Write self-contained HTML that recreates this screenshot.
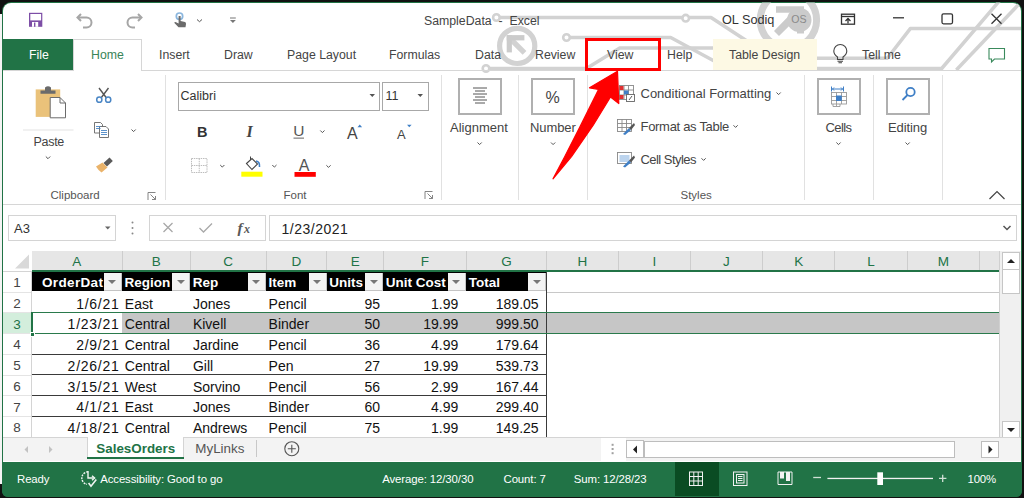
<!DOCTYPE html>
<html><head><meta charset="utf-8">
<style>
*{margin:0;padding:0;box-sizing:border-box}
html,body{width:1024px;height:498px;overflow:hidden;background:#fff}
body{position:relative;font-family:"Liberation Sans",sans-serif;color:#262626}
.a{position:absolute}
.t{position:absolute;white-space:nowrap;line-height:1}
.tab{top:48.7px;font-size:12.3px;color:#444}
.rb{font-size:13px;color:#444}
.rbl{font-size:11.5px;color:#555}
.sep{top:75px;width:1px;height:125px;background:#e1e1e1}
.bigbox{top:77.5px;width:44px;height:37px;border:2px solid #b0b0b0}
.fb{font-size:13px}
.colhdr{background:#e6e6e6}
.ch{font-size:13.5px;color:#217346;text-align:center}
.rh{font-size:13.5px;color:#444;text-align:center}
.hd{font-size:13.5px;font-weight:bold;color:#fff}
.flt{width:18px;height:17.6px;background:#f3f3f3;border-right:1px solid #c4c4c4;border-bottom:1px solid #c4c4c4}
.flt:after{content:"";position:absolute;left:4.5px;top:6.5px;border-left:4px solid transparent;border-right:4px solid transparent;border-top:4px solid #777}
.cl{font-size:14px;color:#111}
.st{font-size:13.4px}
.sb{font-size:11.4px;color:#fff;letter-spacing:-0.1px}
</style></head><body>
<!-- window frame -->
<div class="a" style="left:0;top:0;width:1024px;height:498px;background:#111"></div>
<div class="a" style="left:0;top:14px;width:2px;height:470px;background:#f4f4f4"></div>
<div class="a" style="left:1.5px;top:1.5px;width:1020.5px;height:495px;background:#217346;border-radius:9px 9px 6px 6px"></div>
<div class="a" style="left:2.5px;top:2.5px;width:1018.5px;height:459px;background:#fff;border-radius:8px 8px 0 0"></div>
<!-- circuit background -->
<svg class="a" style="left:0;top:0" width="1024" height="80" viewBox="0 0 1024 80">
<defs><clipPath id="cc"><path d="M3,2.5 H1013 A8,8 0 0 1 1021,10.5 V80 H3 Z"/></clipPath></defs>
<g clip-path="url(#cc)">
<g fill="none" stroke="#d2d2d2" stroke-width="3.5" stroke-linejoin="round">
<path d="M496.4,17.5 H711 L750,43"/>
<path d="M566.5,37.5 H670.7 L716,62"/>
<path d="M486,68.5 H586.4 L619.8,48.1 H716"/>
<path d="M812,58.2 H887.3 L910.3,28.6 H1021"/>
<path d="M812,68.5 H941.7 L1001,-1"/>
<path d="M956.3,70 L1020,3"/>
<circle cx="517.2" cy="45.9" r="17.6" stroke-width="5.2"/>
<circle cx="788.4" cy="20" r="28.2" stroke-width="7"/>
<path d="M509,37.5 L524.5,52.9" stroke-width="5.3" stroke-linecap="butt"/>
</g>
<g fill="#fff" stroke="#d2d2d2" stroke-width="2.6">
<circle cx="496.4" cy="17.5" r="3.3"/>
<circle cx="566.5" cy="37.5" r="3.3"/>
<circle cx="685.7" cy="18.2" r="3.3"/>
<circle cx="486" cy="68.5" r="3.3"/>
</g>
<g fill="#cbcbcb">
<rect x="506.7" y="35.1" width="17.7" height="5.3"/>
<rect x="506.7" y="35.1" width="5.2" height="17.3"/>
<circle cx="799.3" cy="19.9" r="12.2"/>
<path d="M776,6.3 H804 V33.5 H797 V18.3 L779,36 L774,31 L791.8,12.8 H776 Z"/>
</g>
</g>
</svg>
<!-- title -->
<div class="t" style="left:424px;top:14.8px;font-size:12.3px;color:#444">SampleData&nbsp;&nbsp;-&nbsp;&nbsp;Excel</div>
<div class="t" style="left:722px;top:14px;font-size:12.7px;color:#333">OL Sodiq</div>
<div class="t" style="left:791.3px;top:14.2px;font-size:10.6px;color:#8a8a8a">OS</div>
<!-- QAT icons -->
<svg class="a" style="left:0;top:0" width="260" height="40">
<g>
<rect x="29" y="12.8" width="13.3" height="14" fill="#7d4ea6"/>
<rect x="30.3" y="14" width="10.8" height="6.4" fill="#fff"/>
<rect x="32" y="22" width="6.2" height="4.8" fill="#fff"/>
<rect x="34" y="22.5" width="1.4" height="4.3" fill="#7d4ea6"/>
</g>
<g fill="none" stroke="#a6a6a6" stroke-width="2">
<path d="M78,17.5 H86.5 A5,5 0 0 1 86.5,27.5 H83"/>
<path d="M81,14 L77.5,17.5 L81,21"/>
<path d="M141,17.5 H132.5 A5,5 0 0 0 132.5,27.5 H135"/>
<path d="M138,14 L141.5,17.5 L138,21"/>
</g>
<circle cx="179.5" cy="16.2" r="3.2" fill="none" stroke="#8ab6de" stroke-width="1.7"/>
<path d="M178.6,16 H180.6 V21 L185,22 Q186.2,22.5 186,24 L185.5,27.2 H178.5 L174.2,22.8 Q174.8,21.8 176,22.2 L178.6,23.5 Z" fill="#6b6b6b"/>
<path d="M197,19.5 L199.5,21.7 L202,19.5" fill="none" stroke="#555" stroke-width="1"/>
<rect x="230" y="17.5" width="5.8" height="1" fill="#777"/>
<path d="M230,20 H235.8 L232.9,23 Z" fill="#777"/>
</svg>
<!-- right controls -->
<svg class="a" style="left:830;top:0" width="194" height="40" viewBox="830 0 194 40">
<g fill="none" stroke="#333" stroke-width="1.3">
<rect x="841.5" y="14.2" width="13" height="10" />
<path d="M841.5,16.5 H854.5"/>
<path d="M848,23.5 V18.5 M845.5,21 L848,18.5 L850.5,21"/>
<path d="M893,17.8 H904"/>
<rect x="942" y="13.8" width="10.5" height="10" rx="1.5"/>
<path d="M991.5,13.8 L1001.5,23.8 M1001.5,13.8 L991.5,23.8"/>
</g>
</svg>

<!-- tabs row -->
<div class="a" style="left:3px;top:69.5px;width:1018px;height:1px;background:#d6d6d6"></div>
<div class="a" style="left:3px;top:39px;width:70px;height:31px;background:#217346"></div>
<div class="a" style="left:73px;top:39px;width:69px;height:32px;background:#fff;border:1px solid #d6d6d6;border-bottom:none"></div>
<div class="a" style="left:713px;top:39px;width:104px;height:31px;background:#fdf9e4"></div>
<div class="t tab" style="left:29px;color:#fff">File</div>
<div class="t tab" style="left:91px;color:#3a8458">Home</div>
<div class="t tab" style="left:159px">Insert</div>
<div class="t tab" style="left:224px">Draw</div>
<div class="t tab" style="left:287px">Page Layout</div>
<div class="t tab" style="left:389px">Formulas</div>
<div class="t tab" style="left:475px">Data</div>
<div class="t tab" style="left:535px">Review</div>
<div class="t tab" style="left:607px">View</div>
<div class="t tab" style="left:667px">Help</div>
<div class="t tab" style="left:729px">Table Design</div>
<div class="t tab" style="left:862px">Tell me</div>
<svg class="a" style="left:830px;top:40px" width="194" height="30" viewBox="830 40 194 30">
<g fill="none" stroke="#444" stroke-width="1.1">
<path d="M837.5,57 C834.5,55 833.8,52.5 833.8,51 A6.5,6.5 0 0 1 846.8,51 C846.8,52.5 846,55 843,57 V59.5 H837.5 Z"/>
<path d="M837.5,61.3 H843 M838.5,62.8 H842"/>
</g>
<path d="M989,48.5 H1004.5 V59 H994.5 L991.5,62 V59 H989 Z" fill="none" stroke="#3a8a5c" stroke-width="1.1"/>
</svg>
<!-- red highlight box -->
<div class="a" style="left:585px;top:38px;width:76px;height:32.5px;border:3px solid #f00"></div>

<!-- ribbon -->
<div class="a" style="left:3px;top:203.5px;width:1018px;height:1px;background:#d6d6d6"></div>
<!-- separators -->
<div class="a sep" style="left:164.5px"></div>
<div class="a sep" style="left:441px"></div>
<div class="a sep" style="left:518px"></div>
<div class="a sep" style="left:587px"></div>
<div class="a sep" style="left:804px"></div>
<div class="a sep" style="left:873px"></div>
<div class="a sep" style="left:942px"></div>
<!-- clipboard -->
<svg class="a" style="left:0;top:70px" width="170" height="135" viewBox="0 70 170 135">
<rect x="35.7" y="89.4" width="24.5" height="27.5" fill="#eac27a"/>
<path d="M40.5,93.8 V90.5 H45 V87.5 Q48,85 51,87.5 V90.5 H55.5 V93.8 Z" fill="#6b6b6b"/>
<path d="M50.2,97.5 H60 L65.5,103 V117.8 H50.2 Z" fill="#fff" stroke="#6b6b6b" stroke-width="1"/>
<path d="M60,97.5 V103 H65.5" fill="none" stroke="#6b6b6b" stroke-width="1"/>
<rect x="23" y="129.5" width="50.5" height="1" fill="#e3e3e3"/>
<path d="M45.8,156.5 L48,158.7 L50.2,156.5" fill="none" stroke="#555" stroke-width="1"/>
<!-- scissors -->
<g fill="none" stroke="#555" stroke-width="1.4"><path d="M99,88 L106.5,98 M108.5,88 L101,98"/></g>
<g fill="none" stroke="#4a86c5" stroke-width="1.5"><circle cx="99.3" cy="99.7" r="2.6"/><circle cx="108.2" cy="99.7" r="2.6"/></g>
<!-- copy -->
<g fill="#fff" stroke="#666" stroke-width="0.9">
<path d="M94.5,122.5 H100.5 L102.5,124.5 V133 H94.5 Z"/>
<path d="M99.5,126.5 H106 L108.5,129 V137.5 H99.5 Z"/>
</g>
<g stroke="#4a86c5" stroke-width="0.9"><path d="M96,126.5 H100.5 M96,128.5 H100.5 M101,130.5 H107 M101,132.5 H107 M101,134.5 H107"/></g>
<path d="M131.5,129.5 L133.6,131.6 L135.7,129.5" fill="none" stroke="#555" stroke-width="1"/>
<!-- format painter -->
<path d="M103.5,163 L109.5,157.5 L112.8,161 L107,166.5 Z" fill="#5a5a5a"/>
<path d="M96,166.5 L102.5,162.5 L107.5,167.5 L101.5,172.5 Q98,170 96,166.5 Z" fill="#eab36a"/>
<!-- launcher -->
<g fill="none" stroke="#777" stroke-width="0.9"><path d="M148,200 V192.5 H155.5 M150.5,194.5 L155.5,199.5 M152,199.5 H155.5 V196"/></g>
</svg>
<div class="t rb" style="left:33.5px;top:135.5px;font-size:12.5px;letter-spacing:-0.3px">Paste</div>
<div class="t rbl" style="left:50.5px;top:190px">Clipboard</div>
<!-- font group -->
<div class="a" style="left:178px;top:81.5px;width:202px;height:29px;border:1px solid #a8a8a8"></div>
<div class="a" style="left:382px;top:81.5px;width:47px;height:29px;border:1px solid #a8a8a8"></div>
<div class="t rb" style="left:180.5px;top:90px;color:#333;font-size:12.5px">Calibri</div>
<div class="t rb" style="left:385.5px;top:90px;color:#333;font-size:12.5px">11</div>
<svg class="a" style="left:165px;top:75px" width="280" height="130" viewBox="165 75 280 130">
<path d="M369.5,94 H375 L372.25,97 Z M417.5,94 H423 L420.25,97 Z" fill="#555"/>
<text x="197" y="136.6" font-family="Liberation Sans" font-weight="bold" font-size="14.5" fill="#333">B</text>
<text x="246.5" y="136.6" font-family="Liberation Serif" font-style="italic" font-weight="bold" font-size="16" fill="#444">I</text>
<text x="293.3" y="136.3" font-family="Liberation Sans" font-size="15.5" fill="#555">U</text>
<rect x="293.5" y="137.5" width="10.5" height="1.3" fill="#888"/>
<path d="M320.3,130.5 L322.4,132.6 L324.5,130.5" fill="none" stroke="#555" stroke-width="1"/>
<text x="347" y="138.8" font-family="Liberation Sans" font-size="16" fill="#444">A</text>
<path d="M357.5,127.2 L359.8,124.6 L362.1,127.2 Z" fill="#3f7fc6"/>
<text x="397" y="138.8" font-family="Liberation Sans" font-size="13" fill="#444">A</text>
<path d="M407,124.8 H411.6 L409.3,127.2 Z" fill="#3f7fc6"/>
<!-- borders -->
<g fill="none" stroke="#bdbdbd" stroke-width="1" stroke-dasharray="1.5 0.8"><rect x="191.5" y="158.5" width="15.5" height="14"/><path d="M199.25,158.5 V172.5 M191.5,165.5 H207"/></g>
<path d="M220.2,165 L222.3,167.1 L224.4,165" fill="none" stroke="#555" stroke-width="1"/>
<!-- fill -->
<path d="M246.5,163.5 L252,158.5 L257.5,164 L252,169.5 Z" fill="#fff" stroke="#444" stroke-width="1.1"/>
<path d="M250.5,160 V156.5" stroke="#444" stroke-width="1"/>
<path d="M256,161 Q260,161.5 259.5,167" fill="none" stroke="#3f7fc6" stroke-width="1.6"/>
<rect x="241.3" y="171.7" width="21.2" height="5" fill="#ffff00"/>
<path d="M272.3,165 L274.4,167.1 L276.5,165" fill="none" stroke="#555" stroke-width="1"/>
<!-- font color -->
<text x="298.8" y="170.5" font-family="Liberation Sans" font-size="16" fill="#555">A</text>
<rect x="294.5" y="172" width="21.3" height="4.8" fill="#f00"/>
<path d="M326.4,165.3 L328.5,167.4 L330.6,165.3" fill="none" stroke="#555" stroke-width="1"/>
<g fill="none" stroke="#777" stroke-width="0.9"><path d="M425,199 V191.5 H432.5 M427.5,193.5 L432.5,198.5 M429,198.5 H432.5 V195"/></g>
</svg>
<div class="t rbl" style="left:283.5px;top:190px">Font</div>
<!-- alignment / number -->
<div class="a bigbox" style="left:457.5px"></div>
<div class="a bigbox" style="left:531px"></div>
<div class="a bigbox" style="left:816.5px"></div>
<div class="a bigbox" style="left:886px"></div>
<svg class="a" style="left:440px;top:75px" width="580" height="130" viewBox="440 75 580 130">
<g stroke="#555" stroke-width="1"><path d="M473,88 H487 M475,91 H485 M473,94 H487 M475,97 H485 M473,100 H487 M475,103 H485"/></g>
<text x="545.5" y="102.8" font-family="Liberation Sans" font-size="16" fill="#444">%</text>
<path d="M477.5,142.5 L479.6,144.6 L481.7,142.5 M551,142.5 L553.1,144.6 L555.2,142.5 M836.4,142.5 L838.5,144.6 L840.6,142.5 M905.5,142.5 L907.6,144.6 L909.7,142.5" fill="none" stroke="#555" stroke-width="1"/>
<!-- cells icon -->
<g fill="none" stroke="#999" stroke-width="0.9"><rect x="831.5" y="92.5" width="15" height="11.5"/><path d="M836.5,92.5 V106 M841.5,92.5 V104 M831.5,96.5 H846.5 M831.5,100.5 H846.5 M833,104 V106.5 H840 V104"/></g>
<rect x="836" y="95.5" width="5.8" height="5.5" fill="#3f7fc6"/>
<g stroke="#3f7fc6" stroke-width="1" fill="none"><path d="M831.5,89 H843.5 M831.5,86.5 V91.5 M843.5,86.5 V91.5 M834,87.5 L832.5,89 L834,90.5 M841,87.5 L842.5,89 L841,90.5"/></g>
<!-- editing icon -->
<g fill="none" stroke="#3f7fc6" stroke-width="1.8"><circle cx="910.5" cy="92" r="4.2"/><path d="M907.5,95 L902.5,100"/></g>
<!-- CF icon -->
<g fill="none" stroke="#888" stroke-width="0.9"><rect x="619.5" y="85.5" width="14" height="14"/><path d="M624,85.5 V99.5 M628.5,85.5 V99.5 M619.5,90 H633.5 M619.5,95 H633.5"/></g>
<rect x="619.5" y="86" width="4" height="4" fill="#e03030"/><rect x="624" y="90.5" width="4.5" height="4" fill="#3f7fc6"/><rect x="619.5" y="95" width="4" height="4" fill="#e03030"/>
<rect x="626.5" y="94.5" width="8" height="7" fill="#fff" stroke="#666" stroke-width="0.9"/>
<path d="M629,100 L632,96" stroke="#444" stroke-width="0.9"/>
<!-- FaT icon -->
<g fill="none" stroke="#888" stroke-width="0.9"><rect x="617.5" y="119.5" width="14" height="12"/><path d="M622,119.5 V131.5 M626.5,119.5 V131.5 M617.5,123.5 H631.5 M617.5,127.5 H631.5"/></g>
<path d="M623,134 L629,128 L631,130 L625,135 Z" fill="#3f7fc6"/><path d="M629,128 L634,123 L635,125 L631,130 Z" fill="#555"/>
<!-- cell styles icon -->
<g fill="none" stroke="#888" stroke-width="0.9"><rect x="617.5" y="152.5" width="14" height="11"/></g>
<rect x="619.5" y="155" width="10" height="7" fill="#bcd4ee"/>
<path d="M623,166.5 L629,160.5 L631,162.5 L625,167.5 Z" fill="#3f7fc6"/><path d="M629,160.5 L634,155.5 L635,157.5 L631,162.5 Z" fill="#555"/>
<path d="M776.5,92.5 L778.6,94.6 L780.7,92.5 M733.5,125.3 L735.6,127.4 L737.7,125.3 M701.5,158.3 L703.6,160.4 L705.7,158.3" fill="none" stroke="#555" stroke-width="1"/>
<path d="M989.5,199 L997,191.5 L1004.5,199" fill="none" stroke="#444" stroke-width="1.2"/>
</svg>
<div class="t rb" style="left:450px;top:120.5px">Alignment</div>
<div class="t rb" style="left:530px;top:120.5px;letter-spacing:-0.1px">Number</div>
<div class="t rb" style="left:640.5px;top:86.5px">Conditional Formatting</div>
<div class="t rb" style="left:640.5px;top:119.5px;letter-spacing:-0.3px">Format as Table</div>
<div class="t rb" style="left:640.5px;top:152.5px;letter-spacing:-0.55px">Cell Styles</div>
<div class="t rbl" style="left:680.5px;top:190px">Styles</div>
<div class="t rb" style="left:825.5px;top:120.5px;letter-spacing:-0.6px">Cells</div>
<div class="t rb" style="left:888px;top:120.5px;letter-spacing:-0.1px">Editing</div>
<!-- red arrow -->
<svg class="a" style="left:540px;top:60px" width="100" height="130" viewBox="540 60 100 130">
<path d="M617.5,71.3 L589.5,87.8 L598.5,89.5 L580.7,125.2 L564.8,156.6 L553,178.8 L571.5,156.6 L593.2,125.2 L610.5,97 L618.8,103.5 Z" fill="#f00" stroke="#f00" stroke-width="1.2" stroke-linejoin="round"/>
</svg>

<div class="a" style="left:8px;top:215px;width:108px;height:25.5px;border:1px solid #d4d4d4"></div>
<div class="t fb" style="left:14px;top:222px;color:#333">A3</div>
<svg class="a" style="left:99.5px;top:220px" width="20" height="16"><path d="M5,6.5 H10.5 L7.75,9.5 Z" fill="#666"/></svg>
<svg class="a" style="left:128px;top:218px" width="10" height="20"><g fill="#888"><circle cx="4.5" cy="4.5" r="1"/><circle cx="4.5" cy="10" r="1"/><circle cx="4.5" cy="15.5" r="1"/></g></svg>
<div class="a" style="left:149px;top:215px;width:117px;height:25.5px;border:1px solid #d4d4d4"></div>
<svg class="a" style="left:150px;top:216px" width="116" height="24" viewBox="150 216 116 24"><g fill="none" stroke="#a8a8a8" stroke-width="1.3"><path d="M163.5,223 L172.5,232 M172.5,223 L163.5,232"/><path d="M199.5,228 L203.5,232 L212,223.5"/></g><text x="237.5" y="232.5" font-family="Liberation Serif" font-style="italic" font-weight="bold" font-size="15.5" fill="#595959">f</text><text x="244" y="232.5" font-family="Liberation Serif" font-style="italic" font-weight="bold" font-size="12" fill="#595959">x</text></svg>
<div class="a" style="left:269px;top:215px;width:748px;height:25.5px;border:1px solid #d4d4d4"></div>
<div class="t fb" style="left:281.5px;top:222px;color:#222;font-size:14px;letter-spacing:0.5px">1/23/2021</div>
<svg class="a" style="left:1000px;top:220px" width="16" height="16"><path d="M3.5,6 L7,9.5 L10.5,6" fill="none" stroke="#555" stroke-width="1.5"/></svg>
<div class="a colhdr" style="left:31.5px;top:251px;width:968.10px;height:20px"></div>
<svg class="a" style="left:13px;top:253px" width="18" height="17"><path d="M2,15.5 H16 V1.5 Z" fill="#d9d9d9"/></svg>
<div class="t ch" style="left:31.50px;top:255px;width:90.70px">A</div>
<div class="t ch" style="left:122.20px;top:255px;width:68.10px">B</div>
<div class="t ch" style="left:190.30px;top:255px;width:75.70px">C</div>
<div class="t ch" style="left:266.00px;top:255px;width:60.90px">D</div>
<div class="t ch" style="left:326.90px;top:255px;width:56.50px">E</div>
<div class="t ch" style="left:383.40px;top:255px;width:82.85px">F</div>
<div class="t ch" style="left:466.25px;top:255px;width:80.35px">G</div>
<div class="t ch" style="left:546.60px;top:255px;width:71.80px">H</div>
<div class="t ch" style="left:618.40px;top:255px;width:71.90px">I</div>
<div class="t ch" style="left:690.30px;top:255px;width:72.40px">J</div>
<div class="t ch" style="left:762.70px;top:255px;width:72.10px">K</div>
<div class="t ch" style="left:834.80px;top:255px;width:72.40px">L</div>
<div class="t ch" style="left:907.20px;top:255px;width:72.40px">M</div>
<div class="a" style="left:121.70px;top:251px;width:1px;height:19px;background:#cdcdcd"></div>
<div class="a" style="left:189.80px;top:251px;width:1px;height:19px;background:#cdcdcd"></div>
<div class="a" style="left:265.50px;top:251px;width:1px;height:19px;background:#cdcdcd"></div>
<div class="a" style="left:326.40px;top:251px;width:1px;height:19px;background:#cdcdcd"></div>
<div class="a" style="left:382.90px;top:251px;width:1px;height:19px;background:#cdcdcd"></div>
<div class="a" style="left:465.75px;top:251px;width:1px;height:19px;background:#cdcdcd"></div>
<div class="a" style="left:546.10px;top:251px;width:1px;height:19px;background:#cdcdcd"></div>
<div class="a" style="left:617.90px;top:251px;width:1px;height:19px;background:#cdcdcd"></div>
<div class="a" style="left:689.80px;top:251px;width:1px;height:19px;background:#cdcdcd"></div>
<div class="a" style="left:762.20px;top:251px;width:1px;height:19px;background:#cdcdcd"></div>
<div class="a" style="left:834.30px;top:251px;width:1px;height:19px;background:#cdcdcd"></div>
<div class="a" style="left:906.70px;top:251px;width:1px;height:19px;background:#cdcdcd"></div>
<div class="a" style="left:979.10px;top:251px;width:1px;height:19px;background:#cdcdcd"></div>
<div class="t rh" style="left:3px;top:276.10px;width:28px;">1</div>
<div class="a" style="left:3px;top:291.55px;width:28.5px;height:1px;background:#e4e4e4"></div>
<div class="t rh" style="left:3px;top:296.85px;width:28px;">2</div>
<div class="a" style="left:3px;top:312.30px;width:28.5px;height:1px;background:#e4e4e4"></div>
<div class="a" style="left:3px;top:312.80px;width:28.5px;height:20.75px;background:#d3eedc"></div>
<div class="t rh" style="left:3px;top:317.60px;width:28px;color:#217346">3</div>
<div class="a" style="left:3px;top:333.05px;width:28.5px;height:1px;background:#e4e4e4"></div>
<div class="t rh" style="left:3px;top:338.35px;width:28px;">4</div>
<div class="a" style="left:3px;top:353.80px;width:28.5px;height:1px;background:#e4e4e4"></div>
<div class="t rh" style="left:3px;top:359.10px;width:28px;">5</div>
<div class="a" style="left:3px;top:374.55px;width:28.5px;height:1px;background:#e4e4e4"></div>
<div class="t rh" style="left:3px;top:379.85px;width:28px;">6</div>
<div class="a" style="left:3px;top:395.30px;width:28.5px;height:1px;background:#e4e4e4"></div>
<div class="t rh" style="left:3px;top:400.60px;width:28px;">7</div>
<div class="a" style="left:3px;top:416.05px;width:28.5px;height:1px;background:#e4e4e4"></div>
<div class="t rh" style="left:3px;top:421.35px;width:28px;">8</div>
<div class="a" style="left:3px;top:436.80px;width:28.5px;height:1px;background:#e4e4e4"></div>
<div class="a" style="left:30.5px;top:271px;width:1px;height:166px;background:#d4d4d4"></div>
<div class="a" style="left:3px;top:270.5px;width:28.5px;height:1px;background:#d4d4d4"></div>
<div class="a" style="left:31.5px;top:271.3px;width:515.1px;height:20.2px;background:#000"></div>
<div class="a" style="left:31.5px;top:270.3px;width:968px;height:1.5px;background:#217346"></div>
<div class="a" style="left:546.6px;top:292px;width:453px;height:1px;background:#c8c8c8"></div>
<div class="a" style="left:122.2px;top:312.5px;width:877.4px;height:21px;background:#c6c6c6"></div>
<div class="a" style="left:546px;top:271.5px;width:1px;height:166px;background:#3a3a3a"></div>
<div class="a" style="left:31.5px;top:311.8px;width:968px;height:1.4px;background:#2a7a4c"></div>
<div class="a" style="left:31.5px;top:333px;width:968px;height:1.4px;background:#2a7a4c"></div>
<div class="a" style="left:30.5px;top:312px;width:2px;height:22.5px;background:#217346"></div>
<div class="a" style="left:30px;top:331.5px;width:5px;height:5px;background:#217346;border:1px solid #fff"></div>
<div class="a" style="left:31.5px;top:353.70px;width:515.1px;height:1px;background:#3a3a3a"></div>
<div class="a" style="left:31.5px;top:374.45px;width:515.1px;height:1px;background:#3a3a3a"></div>
<div class="a" style="left:31.5px;top:395.20px;width:515.1px;height:1px;background:#3a3a3a"></div>
<div class="a" style="left:31.5px;top:415.95px;width:515.1px;height:1px;background:#3a3a3a"></div>
<div class="a" style="left:31.5px;top:436.70px;width:515.1px;height:1px;background:#3a3a3a"></div>
<div class="a" style="left:31.50px;top:271.3px;width:72.70px;height:20px;overflow:hidden"><div class="t hd" style="left:10.50px;top:4.5px;letter-spacing:0.35px">OrderDat</div></div>
<div class="a flt" style="left:103.90px;top:273.3px"></div>
<div class="a" style="left:122.20px;top:271.3px;width:50.10px;height:20px;overflow:hidden"><div class="t hd" style="left:2.40px;top:4.5px;">Region</div></div>
<div class="a flt" style="left:172.00px;top:273.3px"></div>
<div class="a" style="left:190.30px;top:271.3px;width:57.70px;height:20px;overflow:hidden"><div class="t hd" style="left:2.40px;top:4.5px;">Rep</div></div>
<div class="a flt" style="left:247.70px;top:273.3px"></div>
<div class="a" style="left:266.00px;top:271.3px;width:42.90px;height:20px;overflow:hidden"><div class="t hd" style="left:2.40px;top:4.5px;">Item</div></div>
<div class="a flt" style="left:308.60px;top:273.3px"></div>
<div class="a" style="left:326.90px;top:271.3px;width:38.50px;height:20px;overflow:hidden"><div class="t hd" style="left:2.40px;top:4.5px;">Units</div></div>
<div class="a flt" style="left:365.10px;top:273.3px"></div>
<div class="a" style="left:383.40px;top:271.3px;width:64.85px;height:20px;overflow:hidden"><div class="t hd" style="left:2.40px;top:4.5px;">Unit Cost</div></div>
<div class="a flt" style="left:447.95px;top:273.3px"></div>
<div class="a" style="left:466.25px;top:271.3px;width:62.35px;height:20px;overflow:hidden"><div class="t hd" style="left:2.40px;top:4.5px;">Total</div></div>
<div class="a flt" style="left:528.30px;top:273.3px"></div>
<div class="t cl" style="right:904.45px;top:296.55px;letter-spacing:0.75px">1/6/21</div>
<div class="t cl" style="left:124.80px;top:296.55px">East</div>
<div class="t cl" style="left:192.90px;top:296.55px">Jones</div>
<div class="t cl" style="left:268.60px;top:296.55px">Pencil</div>
<div class="t cl" style="right:644.00px;top:296.55px">95</div>
<div class="t cl" style="right:565.75px;top:296.55px">1.99</div>
<div class="t cl" style="right:485.40px;top:296.55px">189.05</div>
<div class="t cl" style="right:904.45px;top:317.30px;letter-spacing:0.75px">1/23/21</div>
<div class="t cl" style="left:124.80px;top:317.30px">Central</div>
<div class="t cl" style="left:192.90px;top:317.30px">Kivell</div>
<div class="t cl" style="left:268.60px;top:317.30px">Binder</div>
<div class="t cl" style="right:644.00px;top:317.30px">50</div>
<div class="t cl" style="right:565.75px;top:317.30px">19.99</div>
<div class="t cl" style="right:485.40px;top:317.30px">999.50</div>
<div class="t cl" style="right:904.45px;top:338.05px;letter-spacing:0.75px">2/9/21</div>
<div class="t cl" style="left:124.80px;top:338.05px">Central</div>
<div class="t cl" style="left:192.90px;top:338.05px">Jardine</div>
<div class="t cl" style="left:268.60px;top:338.05px">Pencil</div>
<div class="t cl" style="right:644.00px;top:338.05px">36</div>
<div class="t cl" style="right:565.75px;top:338.05px">4.99</div>
<div class="t cl" style="right:485.40px;top:338.05px">179.64</div>
<div class="t cl" style="right:904.45px;top:358.80px;letter-spacing:0.75px">2/26/21</div>
<div class="t cl" style="left:124.80px;top:358.80px">Central</div>
<div class="t cl" style="left:192.90px;top:358.80px">Gill</div>
<div class="t cl" style="left:268.60px;top:358.80px">Pen</div>
<div class="t cl" style="right:644.00px;top:358.80px">27</div>
<div class="t cl" style="right:565.75px;top:358.80px">19.99</div>
<div class="t cl" style="right:485.40px;top:358.80px">539.73</div>
<div class="t cl" style="right:904.45px;top:379.55px;letter-spacing:0.75px">3/15/21</div>
<div class="t cl" style="left:124.80px;top:379.55px">West</div>
<div class="t cl" style="left:192.90px;top:379.55px">Sorvino</div>
<div class="t cl" style="left:268.60px;top:379.55px">Pencil</div>
<div class="t cl" style="right:644.00px;top:379.55px">56</div>
<div class="t cl" style="right:565.75px;top:379.55px">2.99</div>
<div class="t cl" style="right:485.40px;top:379.55px">167.44</div>
<div class="t cl" style="right:904.45px;top:400.30px;letter-spacing:0.75px">4/1/21</div>
<div class="t cl" style="left:124.80px;top:400.30px">East</div>
<div class="t cl" style="left:192.90px;top:400.30px">Jones</div>
<div class="t cl" style="left:268.60px;top:400.30px">Binder</div>
<div class="t cl" style="right:644.00px;top:400.30px">60</div>
<div class="t cl" style="right:565.75px;top:400.30px">4.99</div>
<div class="t cl" style="right:485.40px;top:400.30px">299.40</div>
<div class="t cl" style="right:904.45px;top:421.05px;letter-spacing:0.75px">4/18/21</div>
<div class="t cl" style="left:124.80px;top:421.05px">Central</div>
<div class="t cl" style="left:192.90px;top:421.05px">Andrews</div>
<div class="t cl" style="left:268.60px;top:421.05px">Pencil</div>
<div class="t cl" style="right:644.00px;top:421.05px">75</div>
<div class="t cl" style="right:565.75px;top:421.05px">1.99</div>
<div class="t cl" style="right:485.40px;top:421.05px">149.25</div>
<div class="a" style="left:999.3px;top:251px;width:1px;height:186.5px;background:#d0d0d0"></div>
<div class="a" style="left:1000.3px;top:251px;width:20.8px;height:186.5px;background:#f0f0f0"></div>
<div class="a" style="left:1001.5px;top:252px;width:18px;height:17.5px;background:#fff;border:1px solid #c6c6c6"></div>
<svg class="a" style="left:1001.5px;top:252px" width="18" height="18"><path d="M5,11 H13 L9,7 Z" fill="#222"/></svg>
<div class="a" style="left:1001.5px;top:269px;width:18px;height:24.5px;background:#fff;border:1px solid #c6c6c6"></div>
<div class="a" style="left:1001.5px;top:420.5px;width:18px;height:17px;background:#fff;border:1px solid #c6c6c6"></div>
<svg class="a" style="left:1001.5px;top:420.5px" width="18" height="18"><path d="M5,7 H13 L9,11 Z" fill="#222"/></svg>
<!-- sheet tabs bar -->
<div class="a" style="left:3px;top:437px;width:1018px;height:24px;background:#f3f3f3;border-top:1px solid #d4d4d4"></div>
<svg class="a" style="left:0;top:437px" width="80" height="24" viewBox="0 437 80 24"><path d="M28,446 L24.5,449.5 L28,453 Z M49,446 L52.5,449.5 L49,453 Z" fill="#c2c2c2"/></svg>
<div class="a" style="left:87.4px;top:437px;width:97px;height:21.5px;background:#fff;border:1px solid #d4d4d4;border-top:none;border-bottom:none"></div>
<div class="a" style="left:87.4px;top:456.5px;width:97px;height:2.2px;background:#217346"></div>
<div class="t st" style="left:96.3px;top:441.5px;font-weight:bold;color:#217346">SalesOrders</div>
<div class="t st" style="left:195.3px;top:441.5px;color:#555">MyLinks</div>
<div class="a" style="left:256px;top:440px;width:1px;height:17px;background:#c8c8c8"></div>
<svg class="a" style="left:282px;top:439px" width="20" height="20"><circle cx="9.8" cy="9.7" r="7" fill="none" stroke="#555" stroke-width="1.1"/><path d="M9.8,5.7 V13.7 M5.8,9.7 H13.8" stroke="#555" stroke-width="1.1"/></svg>
<div class="a" style="left:601px;top:438px;width:25px;height:23.5px;background:#fff"></div>
<svg class="a" style="left:608px;top:440px" width="10" height="20"><g fill="#a0a0a0"><rect x="3.6" y="3.8" width="2" height="2"/><rect x="3.6" y="8" width="2" height="2"/><rect x="3.6" y="12.2" width="2" height="2"/></g></svg>
<div class="a" style="left:626px;top:440.3px;width:18px;height:17.3px;background:#fff;border:1px solid #bdbdbd"></div>
<svg class="a" style="left:626px;top:440.5px" width="18" height="17"><path d="M11,4.5 V12.5 L7,8.5 Z" fill="#222"/></svg>
<div class="a" style="left:643.5px;top:440.5px;width:311px;height:17px;background:#fff;border:1px solid #bdbdbd"></div>
<div class="a" style="left:980.7px;top:440.5px;width:18.5px;height:17.5px;background:#fff;border:1px solid #bdbdbd"></div>
<svg class="a" style="left:980.7px;top:440.5px" width="18" height="17"><path d="M7.5,4.5 V12.5 L11.5,8.5 Z" fill="#222"/></svg>
<!-- status bar -->
<div class="a" style="left:1.5px;top:462px;width:1020.5px;height:34.5px;background:#217346;border-radius:0 0 6px 6px"></div>
<div class="a" style="left:674.5px;top:462px;width:44.5px;height:34px;background:#0a4c23"></div>
<div class="t sb" style="left:17px;top:474px">Ready</div>
<div class="t sb" style="left:100.2px;top:474px">Accessibility: Good to go</div>
<div class="t sb" style="left:382.2px;top:474px">Average: 12/30/30</div>
<div class="t sb" style="left:503.5px;top:474px">Count: 7</div>
<div class="t sb" style="left:573.8px;top:474px">Sum: 12/28/23</div>
<div class="t sb" style="left:967.4px;top:474px">100%</div>
<svg class="a" style="left:0;top:461px" width="1024" height="36" viewBox="0 461 1024 36">
<g fill="none" stroke="#f0f5f2" stroke-width="1.4">
<path d="M88,471.8 A6.3,6.3 0 0 0 87,484.3" stroke-dasharray="1.9 1"/>
<path d="M88,471 V478 H93.5"/>
<path d="M92,475.8 L94.6,478 L92,480.2"/>
<path d="M88.6,483 L91,486.3 L96.3,479.6" stroke-width="1.6"/>
</g>
<g fill="none" stroke="#f2f2f2" stroke-width="1">
<rect x="689.5" y="472" width="13" height="13.5"/>
<path d="M689.5,476.5 H702.5 M689.5,481 H702.5 M693.8,472 V485.5 M698.2,472 V485.5"/>
<rect x="733.5" y="472" width="13.5" height="13.5"/>
<rect x="736.5" y="474.5" width="7.5" height="8.5"/>
<path d="M738,476.5 H742.5 M738,478.5 H742.5 M738,480.5 H742.5"/>
<path d="M778,472 H792 V484.5 H778 Z"/>
</g>
<rect x="780" y="472" width="4" height="6.5" fill="#f2f2f2"/>
<rect x="786" y="472" width="4" height="9" fill="#f2f2f2"/>
<path d="M813.2,477.5 H821" stroke="#cfe0d5" stroke-width="1.3"/>
<rect x="827.4" y="477.8" width="105.6" height="1.3" fill="#f2f2f2"/>
<rect x="877.3" y="472.3" width="5.7" height="12.7" fill="#fff"/>
<path d="M939,478.4 H946.4 M942.7,474.7 V482.1" stroke="#cfe0d5" stroke-width="1.3"/>
</svg>

</body></html>
